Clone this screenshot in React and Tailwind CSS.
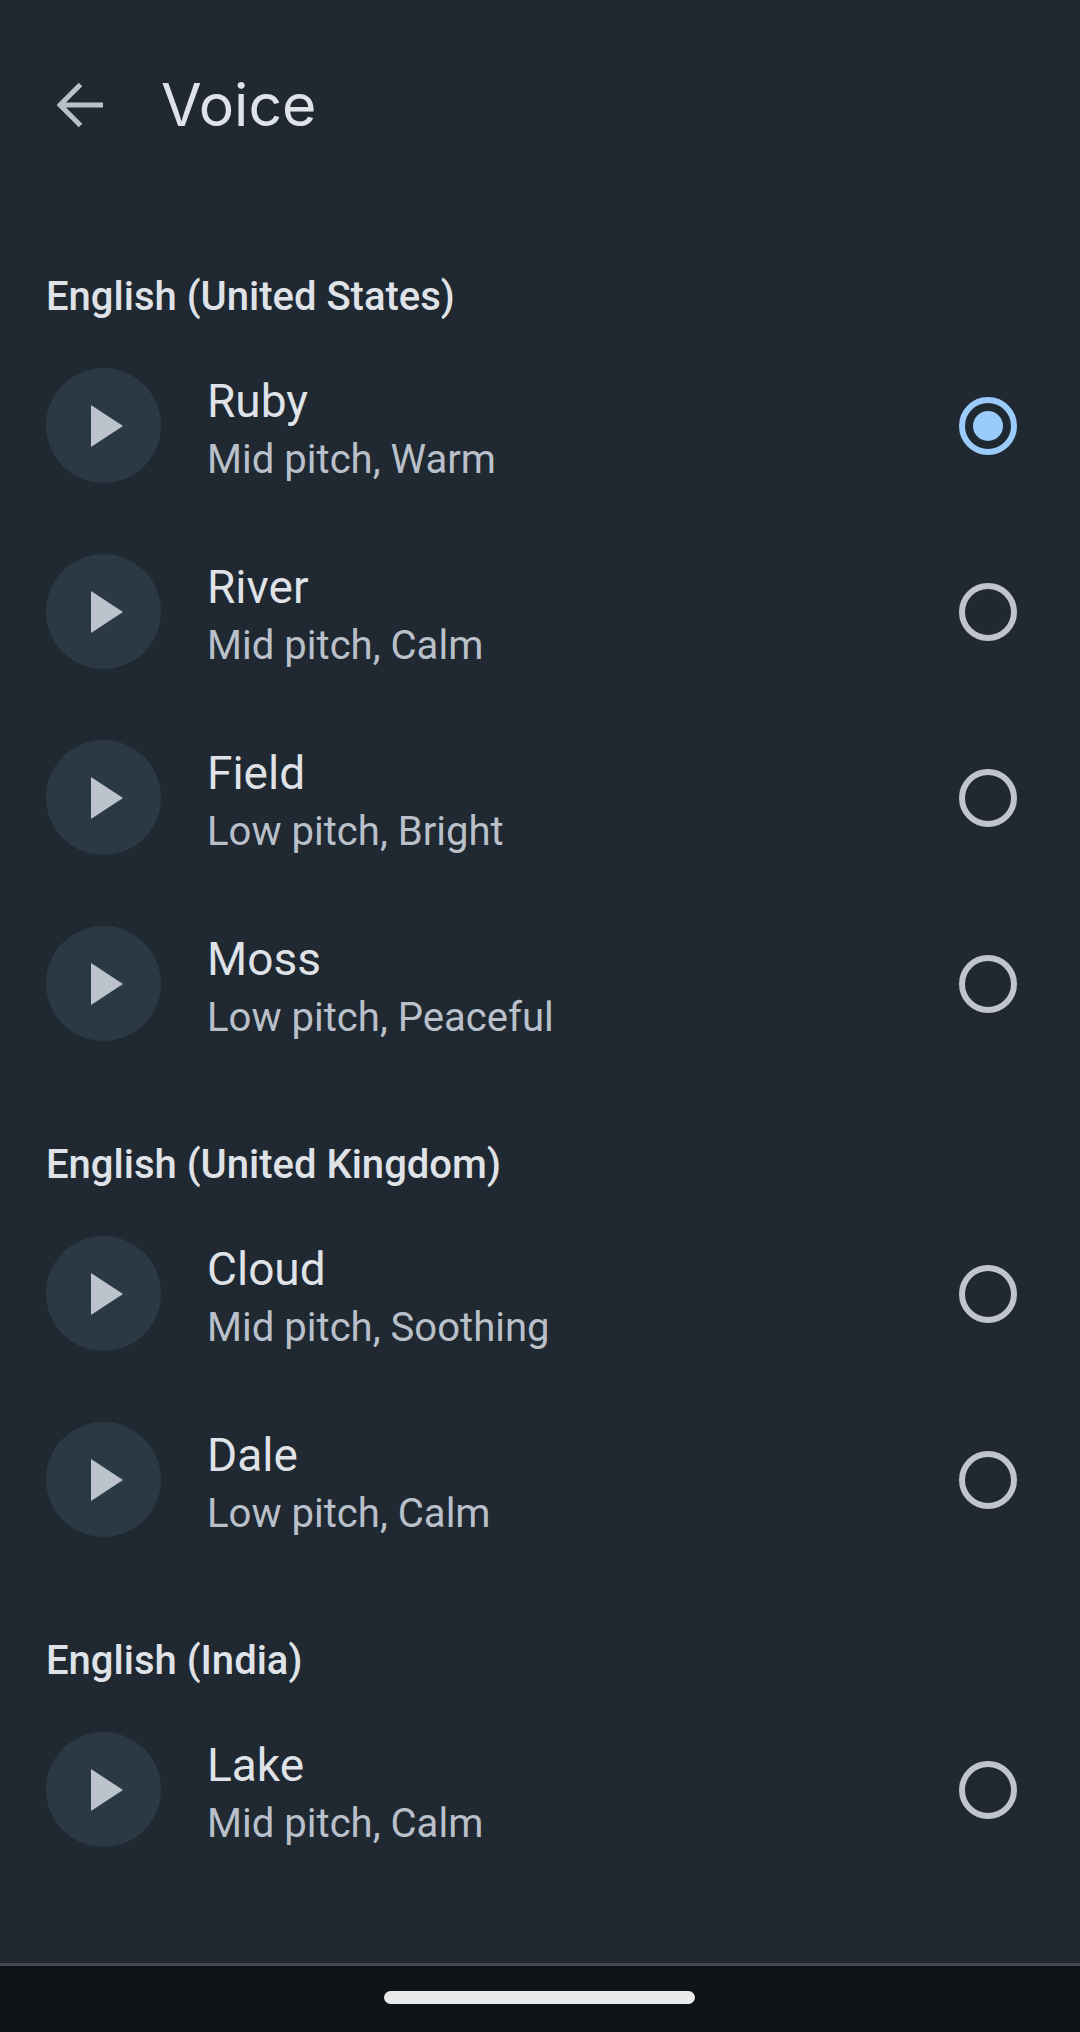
const sections = [
  { title: "English (United States)", voices: [
    ["Ruby", "Mid pitch, Warm", true],
    ["River", "Mid pitch, Calm"],
    ["Field", "Low pitch, Bright"],
    ["Moss", "Low pitch, Peaceful"],
  ]},
  { title: "English (United Kingdom)", voices: [
    ["Cloud", "Mid pitch, Soothing"],
    ["Dale", "Low pitch, Calm"],
  ]},
  { title: "English (India)", voices: [
    ["Lake", "Mid pitch, Calm"],
  ]},
];

function Row({ name, desc, selected }) {
  return (
    <div className="flex h-[186px] items-center pl-[46px] pr-[63px]">
      <div className="flex h-[115px] w-[115px] shrink-0 items-center justify-center rounded-full bg-[#2b3944]">
        <svg width="34" height="42" viewBox="0 0 34 42" className="ml-[6px] mt-[2px]">
          <path d="M1 0 L33 21 L1 42 Z" fill="#bcc3cd" />
        </svg>
      </div>
      <div className="ml-[46px] flex-1 pt-[10px]">
        <div className="text-[46px] leading-[59px] text-[#dfe2e7]">{name}</div>
        <div className="text-[40.1px] leading-[58px] text-[#b9c0ca]">{desc}</div>
      </div>
      {selected ? (
        <div className="mt-[2px] flex h-[58px] w-[58px] items-center justify-center rounded-full border-[6px] border-[#9acbfb]">
          <div className="h-[30px] w-[30px] rounded-full bg-[#9acbfb]" />
        </div>
      ) : (
        <div className="mt-[2px] h-[58px] w-[58px] rounded-full border-[6px] border-[#c1c5cb]" />
      )}
    </div>
  );
}

export default function App() {
  return (
    <div className="flex h-[2032px] w-[1080px] flex-col overflow-hidden bg-[#202832] font-['Roboto',sans-serif]">
      <div className="flex h-[210px] shrink-0 items-center pl-[57px]">
        <svg width="46" height="46" viewBox="0 0 46 46" fill="none" stroke="#b9c0ca" strokeWidth="5">
          <path d="M46 23 H3 M23.5 2.5 L3 23 L23.5 43.5" />
        </svg>
        <div className="ml-[58px] font-['Inter',sans-serif] text-[59px] font-normal text-[#dfe2e7]">Voice</div>
      </div>
      <div className="flex-1">
        {sections.map((s, i) => (
          <div key={s.title} className={i === 0 ? "pt-[58px]" : "pt-[60px]"}>
            <div className="h-[58px] pl-[46px] text-[40px] font-medium leading-[58px] text-[#dfe2e7]">{s.title}</div>
            <div className="mt-[6px]">
              {s.voices.map((v) => (
                <Row key={v[0]} name={v[0]} desc={v[1]} selected={v[2]} />
              ))}
            </div>
          </div>
        ))}
      </div>
      <div className="relative h-[69px] shrink-0 border-t-[3px] border-[#44484f] bg-[#101317]">
        <div className="absolute left-[384px] top-[25px] h-[13px] w-[311px] rounded-full bg-[#e9ebeb]" />
      </div>
    </div>
  );
}
